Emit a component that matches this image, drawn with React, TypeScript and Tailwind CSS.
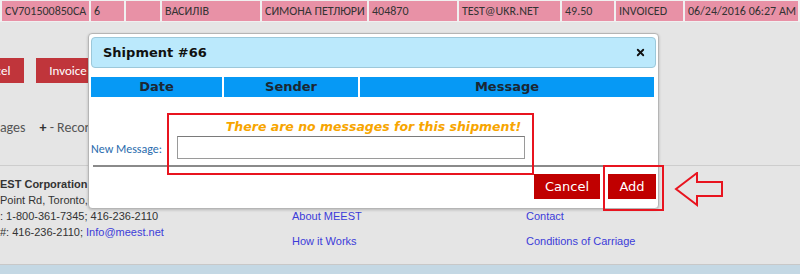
import React from 'react';
import { X } from 'lucide-react';

const rowCells = [
    { w: 'w-[87px]', text: 'CV701500850CA' },
    { w: 'w-[33px]', text: '6' },
    { w: 'w-[34px]', text: '' },
    { w: 'w-[98px]', text: 'ВАСИЛІВ' },
    { w: 'w-[105px]', text: 'СИМОНА ПЕТЛЮРИ' },
    { w: 'w-[88px]', text: '404870' },
    { w: 'w-[101px]', text: 'TEST@UKR.NET' },
    { w: 'w-[52px]', text: '49.50' },
    { w: 'w-[67px]', text: 'INVOICED' },
    { w: 'flex-1', text: '06/24/2016 06:27 AM' }
];

const calibri = "font-['Carlito','Calibri','Open_Sans',sans-serif]";

const ShipmentDialog: React.FC = () => (
    <div className="absolute left-[88px] top-[33px] h-[176px] w-[571px] rounded-[4px] border border-[#b5b5b5] bg-white px-[2px] pt-[3px] shadow-[0_1px_3px_rgba(0,0,0,0.2)]">
        {/* Header */}
        <div className="flex h-[31px] items-center justify-between rounded-[4px] border border-[#9cc8da] bg-[#bbe9fc] pl-[11px] pr-[9px]">
            <span className="font-['DejaVu_Sans',sans-serif] text-[13px] font-bold text-[#111]">Shipment #66</span>
            <X className="h-[11px] w-[11px] text-[#111]" strokeWidth={4} />
        </div>

        {/* Messages table header */}
        <div className="mt-[9px] flex h-[20px] gap-[2px] pr-[2px] font-['DejaVu_Sans',sans-serif] text-[13px] font-bold text-[#1b2733]">
            <div className="flex w-[131px] items-center justify-center bg-[#0699f5]">Date</div>
            <div className="flex w-[134px] items-center justify-center bg-[#0699f5]">Sender</div>
            <div className="flex flex-1 items-center justify-center bg-[#0699f5]">Message</div>
        </div>

        <p className="mt-[22px] text-center font-['DejaVu_Sans',sans-serif] text-[12.5px] font-bold italic leading-[16px] text-[#f7a500]">
            There are no messages for this shipment!
        </p>

        <div className="mt-[1px] flex items-center">
            <label className={`w-[86px] pt-[3px] ${calibri} text-[12px] text-[#2a6cae]`}>New Message:</label>
            <input className="h-[23px] w-[348px] border border-[#9a9a9a] border-t-[#7a7a7a] bg-white outline-none" />
        </div>

        <div className="ml-[2px] mt-[6px] border-t-2 border-[#8a8a8a]" />

        <div className="mt-[7px] flex justify-end gap-[8px] font-['DejaVu_Sans',sans-serif] text-[13px] text-white">
            <button className="h-[25px] w-[66px] bg-[#c00000]">Cancel</button>
            <button className="h-[25px] w-[48px] bg-[#c00000]">Add</button>
        </div>
    </div>
);

const App: React.FC = () => {
    return (
        <div className="relative h-[274px] w-[800px] overflow-hidden bg-[#e5e5e5]">
            {/* Shipment row */}
            <div className={`flex gap-[2px] bg-[#f0f0f0] px-[2px] py-[1px] ${calibri} text-[12px] text-[#333]`}>
                {rowCells.map((c, i) => (
                    <div key={i} className={`${c.w} flex h-[20px] items-center whitespace-nowrap bg-[#e891a6] pl-[3px]`}>
                        {c.text}
                    </div>
                ))}
            </div>

            {/* Action buttons */}
            <div className={`mt-[36px] flex gap-[12px] ${calibri} text-[13px] text-white`}>
                <button className="ml-[-38px] h-[25px] w-[62px] bg-[#c0353b]">Cancel</button>
                <button className="h-[25px] w-[64px] bg-[#c0353b]">Invoice</button>
            </div>

            <div className={`mt-[34px] flex h-[20px] items-center gap-[14px] ${calibri} text-[14px] text-[#555]`}>
                <span className="ml-[-30px]">Messages</span>
                <span>
                    <b className="text-[#333]">+</b> - Records
                </span>
            </div>

            {/* Footer */}
            <div className="mt-[28px] h-[100px] border-y border-t-[#cdcdcd] border-b-[#c8c8c8] font-['Liberation_Sans',Arial,sans-serif] text-[11px] text-[#333]">
                <div className="flex">
                    <div className="w-[292px] pt-[10px] leading-[16px]">
                        <p className="font-bold">EST Corporation</p>
                        <p>Point Rd, Toronto,ON</p>
                        <p>: 1-800-361-7345; 416-236-2110</p>
                        <p>
                            #: 416-236-2110; <a className="text-[#3c3cd9]">Info@meest.net</a>
                        </p>
                    </div>
                    <div className="flex w-[234px] flex-col gap-[9px] pt-[42px] leading-[16px] text-[#3c3cd9]">
                        <a>About MEEST</a>
                        <a>How it Works</a>
                    </div>
                    <div className="flex flex-col gap-[9px] pt-[42px] leading-[16px] text-[#3c3cd9]">
                        <a>Contact</a>
                        <a>Conditions of Carriage</a>
                    </div>
                </div>
            </div>
            <div className="h-[20px] bg-[#c4d8e4]" />

            <ShipmentDialog />

            {/* Annotations */}
            <div className="absolute left-[167px] top-[113px] h-[62px] w-[367px] border-2 border-[#e8141f]" />
            <div className="absolute left-[603px] top-[165px] h-[46px] w-[61px] border-2 border-[#e8141f]" />
            <svg className="absolute left-[674px] top-[172px]" width="50" height="36" viewBox="0 0 50 36">
                <path d="M2 17 L23 1 L23 10 L48 10 L48 24 L23 24 L23 33 Z" fill="none" stroke="#e8141f" strokeWidth="2" strokeLinejoin="miter" />
            </svg>
        </div>
    );
};

export default App;
